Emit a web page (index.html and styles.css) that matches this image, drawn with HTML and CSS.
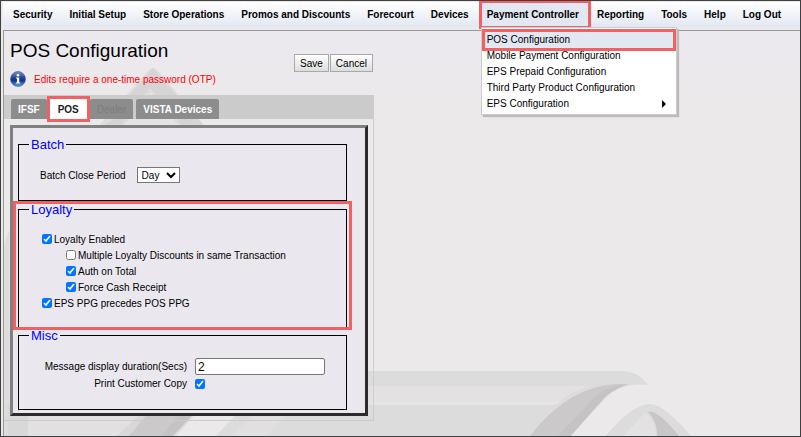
FILE: index.html
```html
<!DOCTYPE html>
<html lang="en">
<head>
  <meta charset="UTF-8">
  <meta name="viewport" content="width=device-width, initial-scale=1.0">
  <title>POS Configuration</title>
  <link rel="stylesheet" href="styles.css">
</head>
<body>
  <nav class="menu">
    <a href="#">Security</a>
    <a href="#">Initial Setup</a>
    <a href="#">Store Operations</a>
    <a href="#">Promos and Discounts</a>
    <a href="#">Forecourt</a>
    <a href="#">Devices</a>
    <div class="menu-item">
      <a href="#" class="open">Payment Controller</a>
      <div class="submenu">
        <a href="#" class="selected">POS Configuration</a>
        <a href="#">Mobile Payment Configuration</a>
        <a href="#">EPS Prepaid Configuration</a>
        <a href="#">Third Party Product Configuration</a>
        <a href="#" class="more">EPS Configuration</a>
      </div>
    </div>
    <a href="#">Reporting</a>
    <a href="#">Tools</a>
    <a href="#">Help</a>
    <a href="#">Log Out</a>
  </nav>

  <main class="panel">
    <svg class="artwork" width="797" height="406" viewBox="4 31 797 406" aria-hidden="true">
      <!-- peak behind the heading -->
      <path fill="#dedcdd" d="M148 71 Q153 65 158 71 L208 130 H95 Z"/>
      <path fill="#d6d4d5" d="M153 68 L128 97 L122 112 L100 130 H117 L150 88 L186 130 H208 L172 90 Z"/>
      <path fill="#e6e3e4" d="M151 92 L182 130 H120 Z"/>
      <!-- left curve -->
      <path fill="#dfddde" d="M4 437 V245 Q7 232 14 225 V437 Z"/>
      <!-- horizontal bars -->
      <path fill="#dddcdc" d="M340 371 H622 Q638 371 648 385 Q620 382 604 400 L569 437 H4 V405 H340 Z"/>
      <path fill="#e3e1e2" d="M340 386 H590 Q570 392 560 401 H340 Z"/>
      <path fill="#e6e4e5" d="M340 401 H562 L555 405 H340 Z"/>
      <!-- right arch -->
      <path fill="#cbc9ca" d="M529 437 Q570 384 620 384 H628 Q606 392 596 404 L565 437 Z"/>
      <path fill="#c6c3c4" d="M557 437 L594 398 Q606 386 628 384 Q612 390 604 398 L570 437 Z"/>
      <path fill="#ece9ea" d="M578 437 L610 402 Q624 385 648 385 L670 437 Z"/>
      <path fill="#dddcdc" d="M605 437 Q632 404 650 404 Q664 404 692 437 Z"/>
      <path fill="#e3e1e2" d="M622 437 L645 413 Q656 420 656 437 Z"/>
      <path fill="#c9c6c7" d="M648 412 Q656 408 680 437 H657 Q658 422 648 412 Z"/>
      <!-- diagonal bands -->
      <path fill="#e2e0e1" d="M28 405 H150 L120 437 H28 Z"/>
      <path fill="#d9d8d9" d="M8 405 H28 V437 H8 Z"/>
      <path fill="#d9d7d8" d="M116 437 L145 410 H155 L128 437 Z"/>
      <path fill="#cbc9ca" d="M128 437 L155 405 H190 L160 437 Z"/>
      <path fill="#c6c3c4" d="M160 437 L188 405 H202 L172 437 Z"/>
      <path fill="#ece9ea" d="M175 437 L203 405 H245 L215 437 Z"/>
      <path fill="#e2dfe0" d="M232 437 L262 405 H295 L265 437 Z"/>
    </svg>

    <header class="heading">
      <div>
        <h1>POS Configuration</h1>
        <p class="notice">
          <svg class="info" width="16" height="16" viewBox="0 0 16 16" aria-hidden="true">
            <defs>
              <linearGradient id="ball" x1="0" y1="0" x2="0" y2="1">
                <stop offset="0" stop-color="#7e93c4"/>
                <stop offset="0.45" stop-color="#1c3f8f"/>
                <stop offset="0.6" stop-color="#12348a"/>
                <stop offset="1" stop-color="#5fa4ee"/>
              </linearGradient>
            </defs>
            <circle cx="8" cy="8" r="7.5" fill="url(#ball)" stroke="#3c5590" stroke-width="0.6"/>
            <circle cx="8" cy="4.2" r="1.3" fill="#fff"/>
            <path fill="#fff" d="M6 6.5 H9.2 V11.5 H10.2 V12.6 H6 V11.5 H7 V7.6 H6 Z"/>
          </svg>
          Edits require a one-time password (OTP)
        </p>
      </div>
      <div class="actions">
        <button type="button">Save</button>
        <button type="button">Cancel</button>
      </div>
    </header>

    <div class="tab-box">
      <div class="tabs">
        <button type="button">IFSF</button>
        <button type="button" class="active">POS</button>
        <button type="button" disabled>Dealer</button>
        <button type="button">VISTA Devices</button>
      </div>

      <form class="frame">
        <fieldset>
          <legend>Batch</legend>
          <div class="batch-row">
            <label for="period">Batch Close Period</label>
            <select id="period"><option>Day</option><option>Shift</option></select>
          </div>
        </fieldset>

        <div class="highlight">
          <fieldset class="loyalty">
            <legend>Loyalty</legend>
            <div class="checks">
              <label><input type="checkbox" checked>Loyalty Enabled</label>
              <label class="sub"><input type="checkbox">Multiple Loyalty Discounts in same Transaction</label>
              <label class="sub"><input type="checkbox" checked>Auth on Total</label>
              <label class="sub"><input type="checkbox" checked>Force Cash Receipt</label>
              <label><input type="checkbox" checked>EPS PPG precedes POS PPG</label>
            </div>
          </fieldset>
        </div>

        <fieldset>
          <legend>Misc</legend>
          <div class="misc-grid">
            <label for="duration">Message display duration(Secs)</label>
            <input type="text" id="duration" value="2">
            <label for="copy">Print Customer Copy</label>
            <input type="checkbox" id="copy" checked>
          </div>
        </fieldset>
      </form>
    </div>
  </main>
</body>
</html>
```

FILE: styles.css
```css
* {
  box-sizing: border-box;
}

body {
  margin: 0;
  height: 100vh;
  display: flex;
  flex-direction: column;
  overflow: hidden;
  padding: 1px 0 0 2px;
  border: 1px solid #3f3f41;
  background: #ece9ea;
  font-family: "Liberation Sans", Arial, sans-serif;
  font-size: 10px;
  color: #000;
}

button,
input,
select {
  font-family: inherit;
  font-size: inherit;
}

.menu {
  display: flex;
  height: 25px;
  padding-left: 2px;
  background: linear-gradient(#fff, #e2e7f2);
  font-weight: bold;
}

.menu a {
  padding: 0 9px 0 8px;
  line-height: 26px;
  color: #000;
  text-decoration: none;
  white-space: nowrap;
}

.menu-item {
  position: relative;
  margin-left: 3px;
}

.menu .open {
  display: block;
  height: 25px;
  padding: 0 10px 0 6px;
  background: #e2e7f2;
  outline: 3px solid #f16062;
  outline-offset: -1px;
}

.submenu {
  position: absolute;
  z-index: 2;
  top: 25px;
  left: 0;
  width: 196px;
  padding: 4px 3px 2px;
  background: #fff;
  border: 1px solid #ccc;
  box-shadow: 2px 2px 1px #bbb;
  font-weight: normal;
}

.submenu a {
  display: block;
  padding: 0 2px;
  line-height: 16px;
}

.submenu .selected {
  background: #e2e7f2;
  outline: 3px solid #f16062;
}

.submenu .more {
  display: flex;
  justify-content: space-between;
  align-items: center;
  padding-right: 7px;
}

.more::after {
  content: "";
  border: 4px solid transparent;
  border-left-color: #000;
  border-right-width: 0;
}

.panel {
  position: relative;
  flex: 1;
  margin-top: 3px;
  border: solid #999;
  border-width: 1px 0 0 1px;
  background: linear-gradient(#ebe9ef, #ece9ea 80px);
}

.artwork {
  position: absolute;
  top: 0;
  left: 0;
}

.heading {
  position: relative;
  display: flex;
  justify-content: space-between;
  width: 370px;
  height: 64px;
  padding-left: 6px;
}

h1 {
  margin: 0;
  padding-top: 8px;
  font-size: 19px;
  font-weight: normal;
  line-height: 24px;
}

.notice {
  display: flex;
  align-items: center;
  gap: 8px;
  margin: 8px 0 0;
  color: #f00;
}

.actions {
  display: flex;
  gap: 1px;
  padding: 23px 1px 0 0;
}

.actions button {
  height: 18px;
  padding: 0 5px;
  border: 1px solid #a9a9a9;
  background: linear-gradient(#fff, #ddd);
}

.tab-box {
  position: relative;
  width: 370px;
  padding: 0 5px 4px 6px;
  border: solid #ccc;
  border-width: 0 1px 1px 0;
}

.tabs {
  display: flex;
  gap: 3px;
  height: 24px;
  margin: 0 -5px 6px -6px;
  padding: 4px 0 0 7px;
  background: #cbcbcb;
}

.tabs button {
  height: 20px;
  padding: 0 7px;
  border: 0;
  border-radius: 2px 2px 0 0;
  background: #8c8c8c;
  color: #fff;
  font-weight: bold;
}

.tabs .active {
  padding: 0 8px;
  border-radius: 0;
  background: #fff;
  color: #222;
  outline: 3px solid #f16062;
}

.tabs button:disabled {
  color: #7c7c7c;
  font-weight: normal;
}

.frame {
  padding: 9px 18px 3px 5px;
  border: 3px solid;
  border-color: #808080 #2c2c2c #2c2c2c #808080;
  background: #eae8ee;
}

fieldset {
  margin: 0;
  padding: 0 10px;
  border: 1px solid #000;
}

legend {
  padding: 0 2px;
  font-size: 13px;
  line-height: 15px;
  color: #00f;
}

.batch-row {
  display: flex;
  align-items: center;
  gap: 11px;
  padding: 15px 0 17px 11px;
}

select {
  width: 43px;
  height: 16px;
  padding: 0;
  border: 1px solid #767676;
  background: #fff;
}

.highlight {
  position: relative;
  margin-top: 1px;
}

.highlight::after {
  content: "";
  position: absolute;
  inset: -1px -5px -2px;
  border: 3px solid #f16062;
  pointer-events: none;
}

.loyalty {
  padding-bottom: 16px;
}

.checks {
  display: flex;
  flex-direction: column;
  padding: 14px 0 0 13px;
}

.checks label {
  display: flex;
  align-items: center;
  gap: 2px;
  height: 16px;
}

.checks .sub {
  padding-left: 24px;
}

input[type="checkbox"] {
  width: 10px;
  height: 10px;
  margin: 0;
}

.misc-grid {
  display: grid;
  grid-template-columns: 148px 130px;
  align-items: center;
  gap: 3px 8px;
  padding: 15px 0 20px 10px;
}

.misc-grid label {
  text-align: right;
}

input[type="text"] {
  height: 17px;
  padding: 0 2px;
  border: 1px solid #767676;
  border-radius: 2px;
  font-size: 12px;
}
```
